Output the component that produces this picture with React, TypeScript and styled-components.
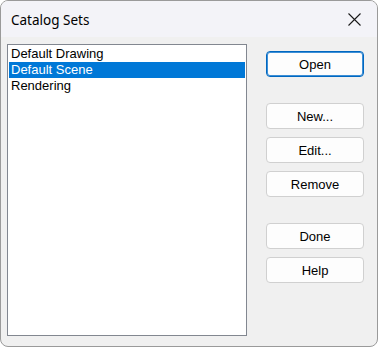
import styled, { createGlobalStyle } from "styled-components";

const GlobalStyle = createGlobalStyle`
  html, body, #root {
    margin: 0;
    padding: 0;
    background: #ffffff;
  }
`;

const Window = styled.div`
  box-sizing: border-box;
  width: 378px;
  height: 347px;
  border: 1px solid #9a9a9a;
  border-radius: 8px;
  overflow: hidden;
  background: #f0f0f0;
  display: flex;
  flex-direction: column;
`;

const TitleBar = styled.div`
  height: 36px;
  flex: none;
  display: flex;
  align-items: center;
  justify-content: space-between;
  padding: 0 0 0 10px;
  background: #f3f3f8;
`;

const Title = styled.span`
  font: 13.5px "Segoe UI", "Noto Sans", sans-serif;
  color: #000;
  margin-top: 1px;
`;

const CloseButton = styled.button`
  width: 46px;
  height: 36px;
  border: 0;
  padding: 0;
  background: transparent;
  display: flex;
  align-items: center;
  justify-content: center;
`;

const Body = styled.div`
  flex: 1;
  display: flex;
  padding: 7px 13px 10px 6px;
`;

const List = styled.ul`
  box-sizing: border-box;
  width: 240px;
  margin: 0;
  padding: 1px;
  list-style: none;
  background: #fff;
  border: 1px solid #828790;
`;

const Item = styled.li<{ $selected?: boolean }>`
  height: 16px;
  padding-left: 2px;
  font: 13px "Liberation Sans", Arial, sans-serif;
  line-height: 16px;
  color: ${(p) => (p.$selected ? "#fff" : "#000")};
  background: ${(p) => (p.$selected ? "#0078d7" : "transparent")};
  white-space: nowrap;
`;

const Buttons = styled.div`
  display: flex;
  flex-direction: column;
  gap: 8px;
  margin: 7px 0 0 19px;
`;

const Spacer = styled.div`
  height: 10px;
`;

const Button = styled.button<{ $default?: boolean }>`
  box-sizing: border-box;
  width: 98px;
  height: 26px;
  margin: 0;
  padding: 0;
  border-radius: 4px;
  border: 1px solid ${(p) => (p.$default ? "#0067c0" : "#d0d0d0")};
  box-shadow: ${(p) => (p.$default ? "inset 0 0 0 1px #3d8fd6" : "none")};
  background: #fdfdfd;
  font: 13px "Liberation Sans", Arial, sans-serif;
  color: #000;
`;

export default function App() {
  return (
    <Window>
      <GlobalStyle />
      <TitleBar>
        <Title>Catalog Sets</Title>
        <CloseButton type="button" aria-label="Close">
          <svg width="13" height="13" viewBox="0 0 13 13">
            <path d="M0.5 0.5 L12.5 12.5 M12.5 0.5 L0.5 12.5" stroke="#1a1a1a" strokeWidth="1.1" />
          </svg>
        </CloseButton>
      </TitleBar>
      <Body>
        <List>
          <Item>Default Drawing</Item>
          <Item $selected>Default Scene</Item>
          <Item>Rendering</Item>
        </List>
        <Buttons>
          <Button $default>Open</Button>
          <Spacer />
          <Button>New...</Button>
          <Button>Edit...</Button>
          <Button>Remove</Button>
          <Spacer />
          <Button>Done</Button>
          <Button>Help</Button>
        </Buttons>
      </Body>
    </Window>
  );
}
